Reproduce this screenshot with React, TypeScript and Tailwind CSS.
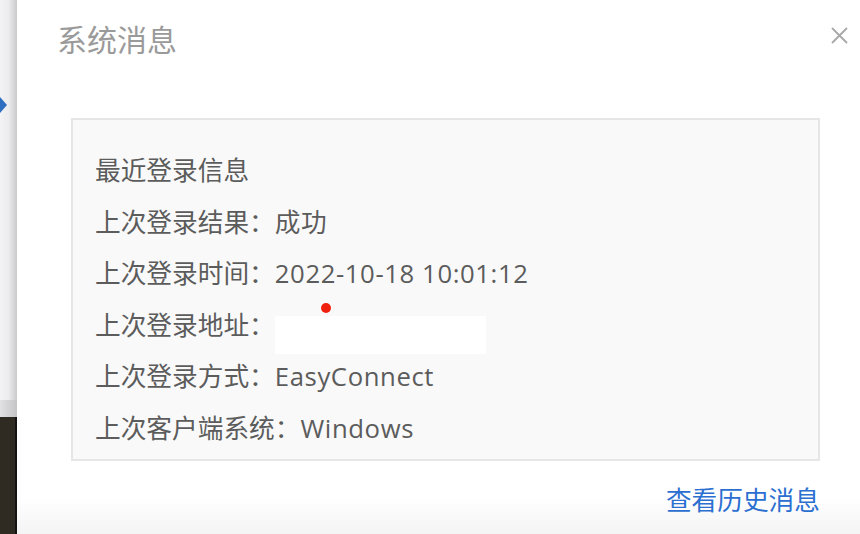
const rows = [
  { label: "上次登录结果：", value: "成功" },
  { label: "上次登录时间：", value: "2022-10-18 10:01:12" },
  { label: "上次登录地址：", value: "", masked: true },
  { label: "上次登录方式：", value: "EasyConnect" },
  { label: "上次客户端系统：", value: "Windows" },
];

const font = { fontFamily: '"Open Sans", "Noto Sans CJK SC", sans-serif' };

export default function App() {
  return (
    <div className="flex h-[534px] w-[860px] overflow-hidden bg-white" style={font}>
      {/* page behind the dialog */}
      <div className="flex w-[17px] shrink-0 flex-col">
        <div className="relative h-[400px] bg-gradient-to-r from-[#f3f3f5] via-[#ececee] to-[#c9c9cb]">
          <div className="absolute left-0 top-[97px] h-0 w-0 border-y-[8px] border-l-[7px] border-y-transparent border-l-[#2e6fc2]" />
        </div>
        <div className="h-[17px] bg-gradient-to-r from-[#e2e2e4] to-[#c4c4c6]" />
        <div className="flex-1 border-r-2 border-[#151310] bg-[#2f2a22]" />
      </div>

      {/* dialog */}
      <div className="flex flex-1 flex-col bg-gradient-to-b from-white from-[93%] to-[#f4f4f4]">
        <div className="flex h-[118px] items-start justify-between pl-[40px] pr-[12px]">
          <h2 className="mt-[20px] text-[30px] leading-[40px] text-[#9a9a9a]">系统消息</h2>
          <svg className="mt-[27px]" width="17" height="17" viewBox="0 0 17 17" fill="none" stroke="#a8a8a8" strokeWidth="1.8" strokeLinecap="round">
            <path d="M1.5 1.5 L15.5 15.5 M15.5 1.5 L1.5 15.5" />
          </svg>
        </div>

        <div className="ml-[54px] w-[749px] border-2 border-[#e6e6e6] bg-[#f9f9f9] pl-[22px] pt-[25px] pb-[4px] text-[25.7px] text-[#5c5c5c]">
          <div className="h-[51.6px] leading-[51.6px]">最近登录信息</div>
          {rows.map((r) => (
            <div key={r.label} className="relative flex h-[51.6px] items-center leading-[51.6px]">
              <span>{r.label}</span>
              {r.masked ? (
                <span className="h-[38px] w-[211px] translate-y-[9px] bg-white" />
              ) : (
                <span className="tracking-[0.6px]">{r.value}</span>
              )}
              {r.masked && (
                <span className="absolute left-[226px] top-[3px] h-[10px] w-[10px] rounded-full bg-[#f0200f]" />
              )}
            </div>
          ))}
        </div>

        <div className="flex w-[803px] justify-end pt-[22px]">
          <a className="text-[25.7px] leading-[36px] text-[#2b6fd1]">查看历史消息</a>
        </div>
      </div>
    </div>
  );
}
